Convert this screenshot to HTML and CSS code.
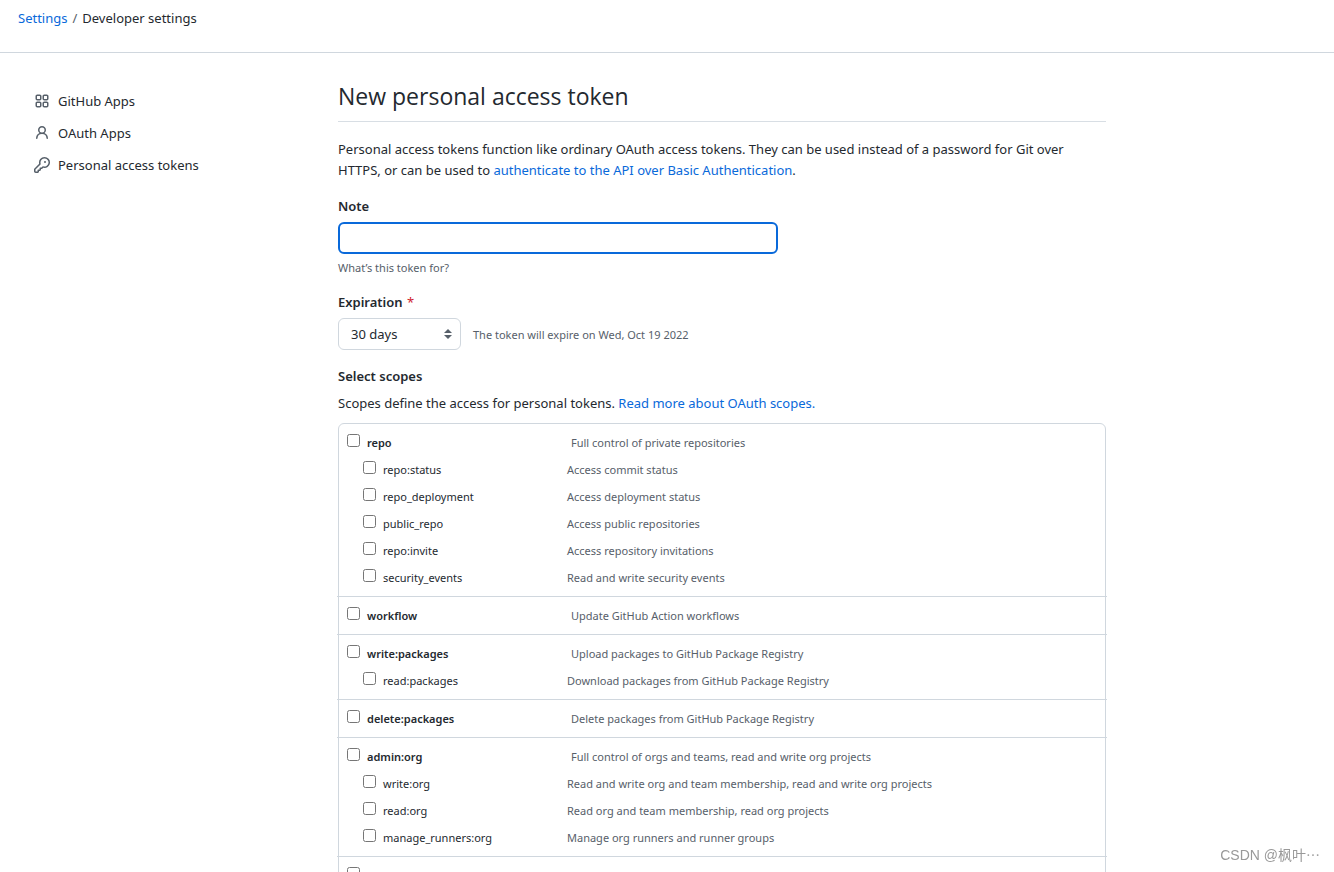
FILE: index.html
```
<!DOCTYPE html>
<html lang="en">
<head>
    <meta charset="UTF-8">
    <meta name="viewport" content="width=device-width, initial-scale=1.0">
    <title>New personal access token</title>
    <link rel="stylesheet" href="styles.css">
</head>
<body>
    <header class="page-header">
        <nav class="breadcrumb">
            <a href="#">Settings</a>
            <span class="separator">/</span>
            <span>Developer settings</span>
        </nav>
    </header>

    <div class="layout">
        <nav class="side-nav">
            <a href="#" class="side-link">
                <svg class="icon" viewBox="0 0 16 16"><path d="M1.5 3.25c0-.966.784-1.75 1.75-1.75h2.5c.966 0 1.75.784 1.75 1.75v2.5A1.75 1.75 0 015.75 7.5h-2.5A1.75 1.75 0 011.5 5.75v-2.5zM3.25 3a.25.25 0 00-.25.25v2.5c0 .138.112.25.25.25h2.5A.25.25 0 006 5.75v-2.5A.25.25 0 005.75 3h-2.5zM1.5 10.25c0-.966.784-1.75 1.75-1.75h2.5c.966 0 1.75.784 1.75 1.75v2.5a1.75 1.75 0 01-1.75 1.75h-2.5a1.75 1.75 0 01-1.75-1.75v-2.5zM3.25 10a.25.25 0 00-.25.25v2.5c0 .138.112.25.25.25h2.5a.25.25 0 00.25-.25v-2.5a.25.25 0 00-.25-.25h-2.5zM8.5 3.25c0-.966.784-1.75 1.75-1.75h2.5c.966 0 1.75.784 1.75 1.75v2.5a1.75 1.75 0 01-1.75 1.75h-2.5A1.75 1.75 0 018.5 5.75v-2.5zM10.25 3a.25.25 0 00-.25.25v2.5c0 .138.112.25.25.25h2.5a.25.25 0 00.25-.25v-2.5a.25.25 0 00-.25-.25h-2.5zM8.5 10.25c0-.966.784-1.75 1.75-1.75h2.5c.966 0 1.75.784 1.75 1.75v2.5a1.75 1.75 0 01-1.75 1.75h-2.5a1.75 1.75 0 01-1.75-1.75v-2.5zm1.75-.25a.25.25 0 00-.25.25v2.5c0 .138.112.25.25.25h2.5a.25.25 0 00.25-.25v-2.5a.25.25 0 00-.25-.25h-2.5z"/></svg>
                GitHub Apps
            </a>
            <a href="#" class="side-link">
                <svg class="icon" viewBox="0 0 16 16"><path d="M10.5 5a2.5 2.5 0 11-5 0 2.5 2.5 0 015 0zm.061 3.073a4 4 0 10-5.123 0 6.004 6.004 0 00-3.431 5.142.75.75 0 001.498.07 4.5 4.5 0 018.99 0 .75.75 0 101.498-.07 6.005 6.005 0 00-3.432-5.142z"/></svg>
                OAuth Apps
            </a>
            <a href="#" class="side-link">
                <svg class="icon" viewBox="0 0 16 16"><path d="M6.5 5.5a4 4 0 112.731 3.795.75.75 0 00-.768.18L7.44 10.5H6.25a.75.75 0 00-.75.75v1.19l-.06.06H4.25a.75.75 0 00-.75.75v1.19l-.06.06H1.75a.25.25 0 01-.25-.25v-1.69l5.024-5.023a.75.75 0 00.181-.768A3.995 3.995 0 016.5 5.5zm4-5.5a5.5 5.5 0 00-5.348 6.788L.22 11.72a.75.75 0 00-.22.53v2C0 15.216.784 16 1.75 16h2a.75.75 0 00.53-.22l.5-.5a.75.75 0 00.22-.53V14h.75a.75.75 0 00.53-.22l.5-.5a.75.75 0 00.22-.53V12h.75a.75.75 0 00.53-.22l.932-.932A5.5 5.5 0 1010.5 0zm.5 6a1 1 0 100-2 1 1 0 000 2z"/></svg>
                Personal access tokens
            </a>
        </nav>

        <main class="content">
            <h1 class="title">New personal access token</h1>
            <p class="intro">Personal access tokens function like ordinary OAuth access tokens. They can be used instead of a password for Git over HTTPS, or can be used to <a href="#">authenticate to the API over Basic Authentication</a>.</p>

            <form>
                <div class="field">
                    <label for="note" class="field-label">Note</label>
                    <input type="text" id="note" class="note-input" autofocus>
                    <p class="hint">What’s this token for?</p>
                </div>

                <div class="field">
                    <label for="expiration" class="field-label">Expiration <span class="required">*</span></label>
                    <div class="expiration">
                        <div class="select-wrap">
                            <select id="expiration" class="select">
                                <option>7 days</option>
                                <option selected>30 days</option>
                                <option>60 days</option>
                                <option>90 days</option>
                            </select>
                            <svg class="select-arrows" viewBox="0 0 8 10"><path d="M4 0l4 4H0zM4 10L0 6h8z"/></svg>
                        </div>
                        <span class="hint">The token will expire on Wed, Oct 19 2022</span>
                    </div>
                </div>

                <h2 class="scopes-title">Select scopes</h2>
                <p class="scopes-intro">Scopes define the access for personal tokens. <a href="#">Read more about OAuth scopes.</a></p>

                <ul class="scopes">
                    <li class="scope-group">
                        <div class="scope"><label><input type="checkbox">repo</label><span>Full control of private repositories</span></div>
                        <div class="scope child"><label><input type="checkbox">repo:status</label><span>Access commit status</span></div>
                        <div class="scope child"><label><input type="checkbox">repo_deployment</label><span>Access deployment status</span></div>
                        <div class="scope child"><label><input type="checkbox">public_repo</label><span>Access public repositories</span></div>
                        <div class="scope child"><label><input type="checkbox">repo:invite</label><span>Access repository invitations</span></div>
                        <div class="scope child"><label><input type="checkbox">security_events</label><span>Read and write security events</span></div>
                    </li>
                    <li class="scope-group">
                        <div class="scope"><label><input type="checkbox">workflow</label><span>Update GitHub Action workflows</span></div>
                    </li>
                    <li class="scope-group">
                        <div class="scope"><label><input type="checkbox">write:packages</label><span>Upload packages to GitHub Package Registry</span></div>
                        <div class="scope child"><label><input type="checkbox">read:packages</label><span>Download packages from GitHub Package Registry</span></div>
                    </li>
                    <li class="scope-group">
                        <div class="scope"><label><input type="checkbox">delete:packages</label><span>Delete packages from GitHub Package Registry</span></div>
                    </li>
                    <li class="scope-group">
                        <div class="scope"><label><input type="checkbox">admin:org</label><span>Full control of orgs and teams, read and write org projects</span></div>
                        <div class="scope child"><label><input type="checkbox">write:org</label><span>Read and write org and team membership, read and write org projects</span></div>
                        <div class="scope child"><label><input type="checkbox">read:org</label><span>Read org and team membership, read org projects</span></div>
                        <div class="scope child"><label><input type="checkbox">manage_runners:org</label><span>Manage org runners and runner groups</span></div>
                    </li>
                    <li class="scope-group">
                        <div class="scope"><label><input type="checkbox">admin:public_key</label><span>Full control of user public keys</span></div>
                    </li>
                </ul>
            </form>
        </main>
    </div>

    <div class="watermark">CSDN @枫叶⋯</div>
</body>
</html>
```
FILE: styles.css
```
* {
    box-sizing: border-box;
}

body {
    margin: 0;
    font-family: 'Segoe UI', 'Noto Sans', sans-serif;
    font-size: 13px;
    line-height: 21px;
    color: #24292f;
    background-color: #fff;
}

a {
    color: #0969da;
    text-decoration: none;
}

/* Header */
.page-header {
    padding: 8px 18px 23px;
    border-bottom: 1px solid #d0d7de;
}

.breadcrumb {
    display: flex;
    gap: 5px;
}

.separator {
    color: #57606a;
}

/* Layout */
.layout {
    display: grid;
    grid-template-columns: 296px minmax(0, 1fr);
    gap: 24px;
    max-width: 1106px;
    padding: 28px 0 0 18px;
}

.side-nav {
    padding: 4px 16px;
}

.side-link {
    display: flex;
    align-items: center;
    gap: 8px;
    height: 32px;
    color: #24292f;
}

.icon {
    width: 16px;
    height: 16px;
    fill: #57606a;
}

/* Main content */
.title {
    margin: 0 0 17px;
    padding-bottom: 10px;
    font-family: 'Segoe UI', 'Open Sans', sans-serif;
    font-size: 23px;
    font-weight: 400;
    line-height: 30px;
    border-bottom: 1px solid #d8dee4;
}

.intro {
    margin: 0 0 15px;
}

.field {
    margin-bottom: 14px;
}

.field-label {
    display: block;
    margin-bottom: 5px;
    font-weight: 600;
}

.required {
    margin-left: 1px;
    font-weight: 400;
    color: #cf222e;
}

.note-input {
    display: block;
    width: 440px;
    max-width: 100%;
    height: 32px;
    padding: 5px 12px;
    font: inherit;
    border: 2px solid #0969da;
    border-radius: 6px;
    outline: none;
}

.hint {
    margin: 3px 0 0;
    font-size: 11px;
    color: #57606a;
}

.expiration {
    display: flex;
    align-items: center;
    gap: 12px;
}

.expiration .hint {
    margin: 0;
}

.select-wrap {
    position: relative;
}

.select {
    display: block;
    width: 123px;
    height: 32px;
    padding: 0 24px 0 12px;
    font: inherit;
    color: #24292f;
    background-color: #fff;
    border: 1px solid #d0d7de;
    border-radius: 6px;
    appearance: none;
}

.select-arrows {
    position: absolute;
    top: 11px;
    right: 9px;
    width: 8px;
    height: 10px;
    fill: #57606a;
    pointer-events: none;
}

/* Scopes */
.scopes-title {
    margin: 16px 0 6px;
    font-size: 13px;
    font-weight: 600;
    line-height: 21px;
}

.scopes-intro {
    margin: 0 0 9px;
}

.scopes {
    margin: 0;
    padding: 0;
    list-style: none;
    font-size: 11px;
    line-height: 27px;
    border: 1px solid #d0d7de;
    border-radius: 6px;
}

.scope-group {
    margin: 0 -2px;
    padding: 5px 10px;
}

.scope-group + .scope-group {
    border-top: 1px solid #d0d7de;
}

.scope {
    display: grid;
    grid-template-columns: 224px 1fr;
    align-items: baseline;
    height: 27px;
    color: #57606a;
}

.scope label {
    display: flex;
    align-items: baseline;
    gap: 7px;
    font-weight: 600;
    color: #24292f;
}

.scope input {
    width: 13px;
    height: 13px;
    margin: 0;
}

.scope.child {
    grid-template-columns: 204px 1fr;
    padding-left: 16px;
}

.scope.child label {
    font-weight: 400;
}

.watermark {
    position: fixed;
    right: 14px;
    bottom: 6px;
    font-family: 'Liberation Sans', 'Noto Sans CJK SC', sans-serif;
    font-size: 14px;
    color: #999;
}
```
